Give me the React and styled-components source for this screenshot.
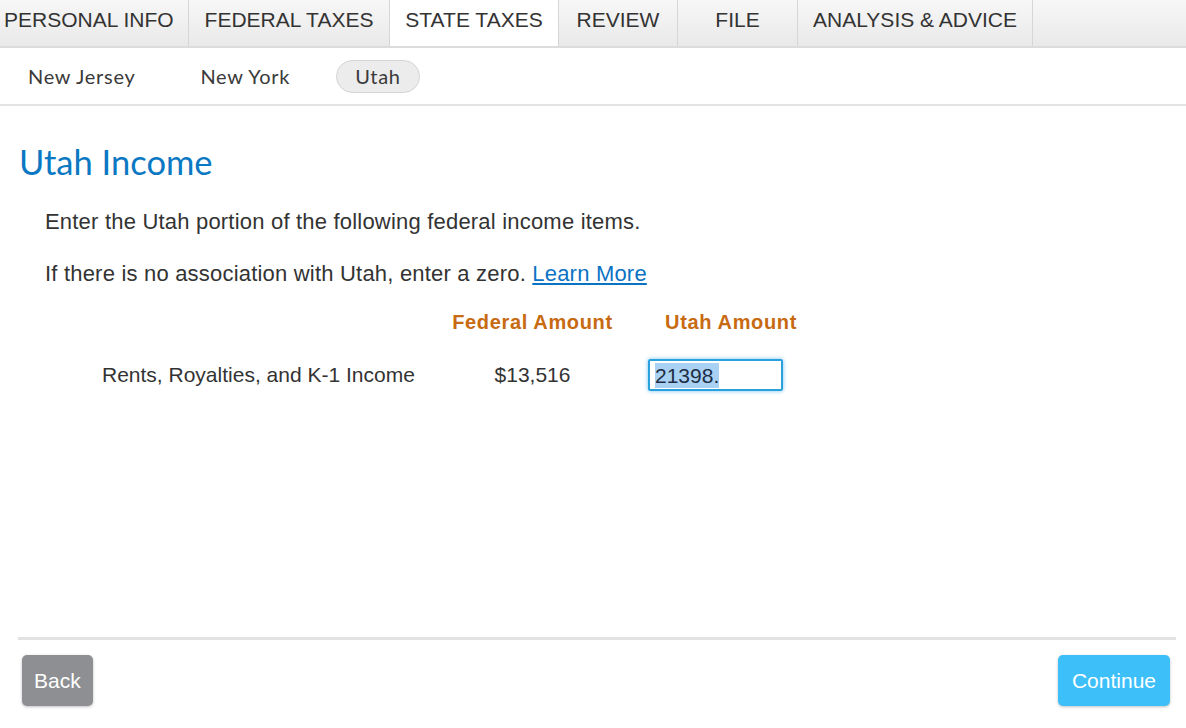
import styled, { createGlobalStyle } from "styled-components";

const GlobalStyle = createGlobalStyle`
  html, body {
    margin: 0;
    padding: 0;
    background: #ffffff;
  }
  * {
    box-sizing: border-box;
  }
`;

const Page = styled.div`
  height: 100vh;
  display: flex;
  flex-direction: column;
  font-family: "Liberation Sans", Arial, sans-serif;
  color: #333333;
`;

const TabBar = styled.nav`
  display: flex;
  height: 48px;
  background: linear-gradient(#f7f7f7, #e9e9e9);
  border-bottom: 2px solid #dcdcdc;
`;

const Tab = styled.div`
  width: ${(p) => p.$width}px;
  padding-top: 8px;
  border-right: 1px solid #d6d6d6;
  background: ${(p) => (p.$active ? "#ffffff" : "transparent")};
  font-size: 21px;
  line-height: 24px;
  text-align: center;
  white-space: nowrap;
  color: #333333;
  &:first-child {
    text-align: left;
    padding-left: 4px;
  }
`;

const SubTabs = styled.div`
  display: flex;
  align-items: center;
  gap: 27px;
  height: 58px;
  padding-left: 9px;
  border-bottom: 2px solid #e3e3e3;
`;

const SubTab = styled.div`
  height: 33px;
  padding: 0 18px;
  display: flex;
  align-items: center;
  border-radius: 17px;
  border: 1px solid ${(p) => (p.$active ? "#d4d4d4" : "transparent")};
  background: ${(p) => (p.$active ? "#ececec" : "transparent")};
  font-family: Lato, "Open Sans", sans-serif;
  font-size: 20px;
  letter-spacing: 0.7px;
  color: #3a3a3a;
`;

const Content = styled.main`
  flex: 1;
  padding-left: 19px;
`;

const Heading = styled.h1`
  margin: 36px 0 0;
  font-family: Lato, "Open Sans", sans-serif;
  font-weight: 400;
  font-size: 34.5px;
  line-height: 40px;
  color: #0a78c2;
`;

const Body = styled.div`
  padding-left: 26px;
`;

const Para = styled.p`
  margin: ${(p) => p.$top}px 0 0;
  font-size: 22px;
  letter-spacing: 0.2px;
  line-height: 26px;
`;

const Link = styled.a`
  color: #0b73c4;
  text-decoration: underline;
`;

const AmountGrid = styled.div`
  display: grid;
  grid-template-columns: 395px 185px 172px;
  align-items: center;
  margin-top: 23px;
`;

const ColHead = styled.div`
  font-weight: 700;
  font-size: 20px;
  line-height: 24px;
  letter-spacing: 0.65px;
  color: #c76a12;
  text-align: ${(p) => p.$align || "center"};
`;

const Cell = styled.div`
  margin-top: 25px;
  height: 32px;
  display: flex;
  align-items: center;
  justify-content: ${(p) => p.$justify || "flex-start"};
  padding-left: ${(p) => p.$indent || 0}px;
  font-size: 21px;
`;

const AmountField = styled.div`
  width: 135px;
  height: 32px;
  margin-left: 23px;
  padding: 0 5px;
  display: flex;
  align-items: center;
  border: 2px solid #2aa0dc;
  border-radius: 2px;
  box-shadow: 0 0 4px rgba(60, 170, 235, 0.7);
  font-size: 21px;
  color: #1c2d44;
`;

const Selected = styled.span`
  background: #a9d1f4;
  line-height: 25px;
`;

const Footer = styled.footer`
  margin: 0 10px 0 18px;
  border-top: 3px solid #e2e2e2;
  padding: 15px 6px 22px 4px;
  display: flex;
  justify-content: space-between;
`;

const Button = styled.button`
  height: 51px;
  padding: 0 ${(p) => p.$pad}px;
  border: none;
  border-radius: 5px;
  background: ${(p) => p.$bg};
  box-shadow: 0 1px 3px rgba(0, 0, 0, 0.25);
  font-family: "Liberation Sans", Arial, sans-serif;
  font-size: 21px;
  color: #ffffff;
  cursor: pointer;
`;

const tabs = [
  { label: "PERSONAL INFO", width: 189 },
  { label: "FEDERAL TAXES", width: 201 },
  { label: "STATE TAXES", width: 169, active: true },
  { label: "REVIEW", width: 119 },
  { label: "FILE", width: 120 },
  { label: "ANALYSIS & ADVICE", width: 235 },
];

const states = ["New Jersey", "New York", "Utah"];

export default function App() {
  return (
    <Page>
      <GlobalStyle />
      <TabBar>
        {tabs.map((t) => (
          <Tab key={t.label} $active={t.active} $width={t.width}>
            {t.label}
          </Tab>
        ))}
      </TabBar>
      <SubTabs>
        {states.map((s) => (
          <SubTab key={s} $active={s === "Utah"}>
            {s}
          </SubTab>
        ))}
      </SubTabs>
      <Content>
        <Heading>Utah Income</Heading>
        <Body>
          <Para $top={27}>
            Enter the Utah portion of the following federal income items.
          </Para>
          <Para $top={26}>
            If there is no association with Utah, enter a zero.{" "}
            <Link href="#">Learn More</Link>
          </Para>
          <AmountGrid>
            <div />
            <ColHead>Federal Amount</ColHead>
            <ColHead $align="right">Utah Amount</ColHead>
            <Cell $indent={57}>Rents, Royalties, and K-1 Income</Cell>
            <Cell $justify="center">$13,516</Cell>
            <Cell>
              <AmountField>
                <Selected>21398.</Selected>
              </AmountField>
            </Cell>
          </AmountGrid>
        </Body>
      </Content>
      <Footer>
        <Button $bg="#8d8f92" $pad={12}>
          Back
        </Button>
        <Button $bg="#3dc0f9" $pad={14}>
          Continue
        </Button>
      </Footer>
    </Page>
  );
}
